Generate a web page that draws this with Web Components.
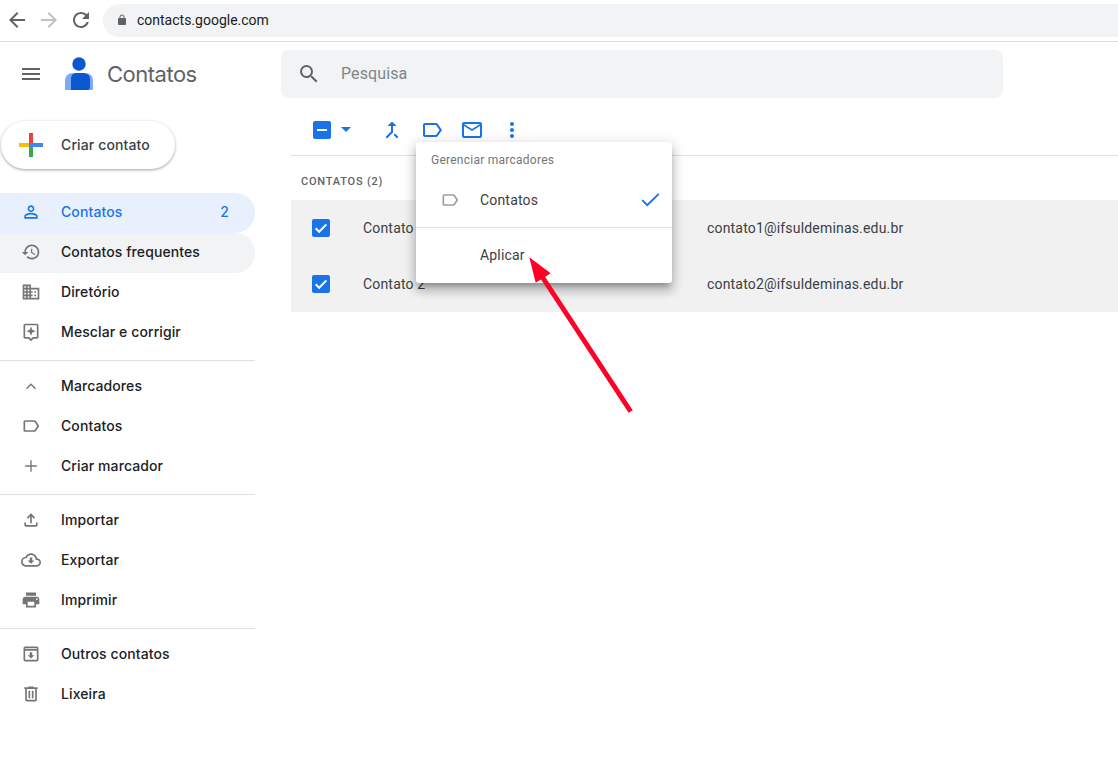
<!DOCTYPE html>
<html lang="pt">
<head>
<meta charset="utf-8">
<title>Contatos</title>
<style>
html,body{margin:0;padding:0;height:766px;overflow:hidden;background:#fff;font-family:Roboto,"Liberation Sans",sans-serif;}
</style>
</head>
<body>
<contacts-app></contacts-app>
<script>
const P={
menu:'M3 18h18v-2H3v2zm0-5h18v-2H3v2zm0-7v2h18V6H3z',
back:'M20 11H7.83l5.59-5.59L12 4l-8 8 8 8 1.41-1.41L7.83 13H20v-2z',
forward:'M12 4l-1.41 1.41L16.17 11H4v2h12.17l-5.58 5.59L12 20l8-8z',
refresh:'M17.65 6.35C16.2 4.9 14.21 4 12 4c-4.42 0-7.99 3.58-7.99 8s3.57 8 7.99 8c3.73 0 6.84-2.55 7.73-6h-2.08c-.82 2.33-3.04 4-5.65 4-3.31 0-6-2.69-6-6s2.69-6 6-6c1.66 0 3.14.69 4.22 1.78L13 11h7V4l-2.35 2.35z',
lock:'M18 8h-1V6c0-2.76-2.24-5-5-5S7 3.24 7 6v2H6c-1.1 0-2 .9-2 2v10c0 1.1.9 2 2 2h12c1.1 0 2-.9 2-2V10c0-1.1-.9-2-2-2zM9 6c0-1.66 1.34-3 3-3s3 1.34 3 3v2H9V6z',
person:'M12 5.9c1.16 0 2.1.94 2.1 2.1s-.94 2.1-2.1 2.1S9.9 9.16 9.9 8s.94-2.1 2.1-2.1m0 9c2.97 0 6.1 1.46 6.1 2.1v1.1H5.9V17c0-.64 3.13-2.1 6.1-2.1M12 4C9.79 4 8 5.79 8 8s1.79 4 4 4 4-1.79 4-4-1.79-4-4-4zm0 9c-2.67 0-8 1.34-8 4v3h16v-3c0-2.66-5.33-4-8-4z',
history:'M13 3c-4.97 0-9 4.03-9 9H1l3.89 3.89.07.14L9 12H6c0-3.87 3.13-7 7-7s7 3.13 7 7-3.13 7-7 7c-1.93 0-3.68-.79-4.94-2.06l-1.42 1.42C8.27 19.99 10.51 21 13 21c4.97 0 9-4.03 9-9s-4.03-9-9-9zm-1 5v5l4.28 2.54.72-1.21-3.5-2.08V8H12z',
domain:'M12 7V3H2v18h20V7H12zM6 19H4v-2h2v2zm0-4H4v-2h2v2zm0-4H4V9h2v2zm0-4H4V5h2v2zm4 12H8v-2h2v2zm0-4H8v-2h2v2zm0-4H8V9h2v2zm0-4H8V5h2v2zm10 12h-8v-2h2v-2h-2v-2h2v-2h-2V9h8v10zm-2-8h-2v2h2v-2zm0 4h-2v2h2v-2z',
fix:'M19 2H5c-1.1 0-2 .9-2 2v14c0 1.1.9 2 2 2h4l3 3 3-3h4c1.1 0 2-.9 2-2V4c0-1.1-.9-2-2-2zm0 16h-4.83L12 20.17 9.83 18H5V4h14v14zM12 5.5l1.6 3.9 3.9 1.6-3.9 1.6-1.6 3.9-1.6-3.9-3.9-1.6 3.9-1.6z',
less:'M12 8.6l-6 6 1.2 1.2 4.8-4.8 4.8 4.8 1.2-1.2z',
label:'M17.63 5.84C17.27 5.33 16.67 5 16 5L5 5.01C3.9 5.01 3 5.9 3 7v10c0 1.1.9 1.99 2 1.99L16 19c.67 0 1.27-.33 1.63-.84L22 12l-4.37-6.16zM16 17H5V7h11l3.55 5L16 17z',
add:'M19 12.8h-6.2V19h-1.6v-6.2H5v-1.6h6.2V5h1.6v6.2H19z',
upload:'M18 15v3H6v-3H4v3c0 1.1.9 2 2 2h12c1.1 0 2-.9 2-2v-3h-2zM7 9l1.41 1.41L11 7.83V16h2V7.83l2.59 2.58L17 9l-5-5-5 5z',
cloud:'M19.35 10.04C18.67 6.59 15.64 4 12 4 9.11 4 6.6 5.64 5.35 8.04 2.34 8.36 0 10.91 0 14c0 3.31 2.69 6 6 6h13c2.76 0 5-2.24 5-5 0-2.64-2.05-4.78-4.65-4.96zM19 18H6c-2.21 0-4-1.79-4-4 0-2.05 1.53-3.76 3.56-3.97l1.07-.11.5-.95C8.08 7.14 9.94 6 12 6c2.62 0 4.88 1.86 5.39 4.43l.3 1.5 1.53.11c1.56.1 2.78 1.41 2.78 2.96 0 1.65-1.35 3-3 3zM13.5 9h-3v3.5H8l4 4 4-4h-2.5z',
print:'M19 8H5c-1.66 0-3 1.34-3 3v6h4v4h12v-4h4v-6c0-1.66-1.34-3-3-3zm-3 11H8v-5h8v5zm3-7c-.55 0-1-.45-1-1s.45-1 1-1 1 .45 1 1-.45 1-1 1zm-1-9H6v4h12V3z',
archive:'M19 3H5c-1.1 0-2 .9-2 2v14c0 1.1.9 2 2 2h14c1.1 0 2-.9 2-2V5c0-1.1-.9-2-2-2zm0 16H5V8h14v11zM5 6V5h14v1H5zM12 17.5l4-4h-2.5V10h-3v3.5H8z',
trash:'M15 4V3H9v1H4v2h1v13c0 1.1.9 2 2 2h10c1.1 0 2-.9 2-2V6h1V4h-5zm2 15H7V6h10v13zM9 8h2v9H9zm4 0h2v9h-2z',
search:'M15.5 14h-.79l-.28-.27A6.471 6.471 0 0 0 16 9.5 6.5 6.5 0 1 0 9.5 16c1.61 0 3.09-.59 4.23-1.57l.27.28v.79l5 4.99L20.49 19l-4.99-5zm-6 0C7.01 14 5 11.99 5 9.5S7.01 5 9.5 5 14 7.01 14 9.5 11.99 14 9.5 14z',
merge:'M17 20.41L18.41 19 15 15.59 13.59 17 17 20.41zM7.5 8H11v5.59L5.59 19 7 20.41l6-6V8h3.5L12 3.5 7.5 8z',
mail:'M20 4H4c-1.1 0-2 .9-2 2v12c0 1.1.9 2 2 2h16c1.1 0 2-.9 2-2V6c0-1.1-.9-2-2-2zm0 14H4V8l8 5 8-5v10zm-8-7L4 6h16l-8 5z',
more:'M12 8c1.1 0 2-.9 2-2s-.9-2-2-2-2 .9-2 2 .9 2 2 2zm0 2c-1.1 0-2 .9-2 2s.9 2 2 2 2-.9 2-2-.9-2-2-2zm0 6c-1.1 0-2 .9-2 2s.9 2 2 2 2-.9 2-2-.9-2-2-2z',
check:'M3.5 12.8l1.3-1.3 4.4 4.2L20.2 5.3l1.3 1.3L9.2 18.4z'
};
const def=(name,html,extra)=>{
  customElements.define(name,class extends HTMLElement{
    constructor(){super();const r=this.attachShadow({mode:'open'});r.innerHTML=html;if(extra)extra(this,r);}
  });
};
customElements.define('m-icon',class extends HTMLElement{
  connectedCallback(){
    if(this.shadowRoot)return;
    const s=this.getAttribute('size')||24,c=this.getAttribute('color')||'currentColor',n=this.getAttribute('name');
    this.attachShadow({mode:'open'}).innerHTML=`<style>:host{display:block;width:${s}px;height:${s}px;flex:none}svg{display:block}</style><svg xmlns="http://www.w3.org/2000/svg" width="${s}" height="${s}" viewBox="0 0 24 24"><path fill="${c}" d="${P[n]}"/></svg>`;
  }
});

def('browser-bar',`<style>
:host{display:flex;align-items:center;box-sizing:border-box;height:42px;border-bottom:1px solid #dcdcdc;padding:0 0 1px 5px;gap:8px;background:#fff}
.pill{flex:1;margin-left:2px;height:33px;border-radius:17px 0 0 17px;background:#f1f3f4;display:flex;align-items:center;padding-left:10px;font:14px/20px Roboto,sans-serif;color:#202124}
</style>
<m-icon name="back" size="24" color="#5f6368"></m-icon>
<m-icon name="forward" size="24" color="#bdc1c6"></m-icon>
<m-icon name="refresh" size="24" color="#5f6368"></m-icon>
<div class="pill"><m-icon name="lock" size="12" color="#5f6368" style="margin-left:3px"></m-icon><span style="margin-left:9px">contacts.google.com</span></div>`);

def('app-logo',`<style>
:host{display:flex;align-items:center;height:64px;box-sizing:border-box;padding-left:19px}
svg{display:block;margin-left:22px;margin-right:14px}
.t{font:400 22px/28px Inter,Roboto,sans-serif;color:#5f6368;letter-spacing:-.5px}
</style>
<m-icon name="menu" size="24" color="#5f6368"></m-icon>
<svg width="28" height="34" viewBox="0 0 28 34"><path fill="#7baaf7" d="M0 33V24c0-5 3-8 8-8h12c5 0 8 3 8 8v9z"/><path fill="#0b57d0" d="M6 33V22c0-4 2-6 6-6h5c5 0 8 2 8 6v8c0 2-1 3-3 3z"/><circle cx="14" cy="7" r="6.7" fill="#0b57d0"/></svg>
<span class="t">Contatos</span>`);

def('create-button',`<style>
:host{display:inline-flex;align-items:center;box-sizing:border-box;height:48px;width:174px;margin:15px 0 24px 1px;border-radius:24px;background:#fff;box-shadow:0 1px 2px rgba(60,64,67,.3),0 1px 3px 1px rgba(60,64,67,.15);padding-left:18px;font:500 14px/20px Inter,Roboto,sans-serif;color:#3c4043;letter-spacing:.12px}
svg{display:block;margin-right:18px}
</style>
<svg width="24" height="24" viewBox="0 0 24 24"><rect x="10" width="4" height="10" fill="#ea4335"/><rect x="14" y="10" width="10" height="4" fill="#4285f4"/><rect x="10" y="14" width="4" height="10" fill="#34a853"/><rect y="10" width="10" height="4" fill="#fbbc05"/><rect x="10" y="10" width="4" height="4" fill="#4285f4"/></svg>
<slot></slot>`);

customElements.define('nav-item',class extends HTMLElement{
  connectedCallback(){
    if(this.shadowRoot)return;
    const st=this.getAttribute('state')||'',ic=this.getAttribute('icon'),n=this.getAttribute('count')||'';
    const bg=st==='active'?'#e8f0fe':st==='hover'?'#f1f3f4':'transparent';
    const col=st==='active'?'#1a73e8':'#202124';
    const icol=st==='active'?'#1a73e8':'#757575';
    this.attachShadow({mode:'open'}).innerHTML=`<style>
:host{display:flex;align-items:center;box-sizing:border-box;height:40px;border-radius:0 20px 20px 0;background:${bg};padding:0 26px 0 21px;font:500 14px/20px Inter,Roboto,sans-serif;color:${col};letter-spacing:.1px}
.l{margin-left:20px;flex:1;position:relative;top:-1px}
.n{position:relative;top:-1px}
</style><m-icon name="${ic}" size="20" color="${icol}" style="position:relative;top:-1px"></m-icon><span class="l"><slot></slot></span>${n?`<span class="n">${n}</span>`:''}`;
  }
});

def('nav-divider',`<style>:host{display:block;height:1px;background:#e0e0e0;margin:7px 0 6px}</style>`);

def('app-sidebar',`<style>
:host{display:block;width:255px;flex:none;box-sizing:border-box}
nav{display:flex;flex-direction:column}
</style>
<app-logo></app-logo>
<create-button>Criar contato</create-button>
<nav>
<nav-item icon="person" state="active" count="2">Contatos</nav-item>
<nav-item icon="history" state="hover">Contatos frequentes</nav-item>
<nav-item icon="domain">Diretório</nav-item>
<nav-item icon="fix">Mesclar e corrigir</nav-item>
<nav-divider></nav-divider>
<nav-item icon="less">Marcadores</nav-item>
<nav-item icon="label">Contatos</nav-item>
<nav-item icon="add">Criar marcador</nav-item>
<nav-divider></nav-divider>
<nav-item icon="upload">Importar</nav-item>
<nav-item icon="cloud">Exportar</nav-item>
<nav-item icon="print">Imprimir</nav-item>
<nav-divider></nav-divider>
<nav-item icon="archive">Outros contatos</nav-item>
<nav-item icon="trash">Lixeira</nav-item>
</nav>`);

def('search-box',`<style>
:host{display:flex;align-items:center;box-sizing:border-box;width:722px;height:48px;margin:8px 0 0 26px;border-radius:8px;background:#f1f3f4;padding-left:16px;font:400 16px/24px Roboto,sans-serif;color:#80868b;letter-spacing:.1px}
span{margin-left:20px}
</style><m-icon name="search" size="24" color="#5f6368"></m-icon><span><slot></slot></span>`);

customElements.define('check-box',class extends HTMLElement{
  connectedCallback(){
    if(this.shadowRoot)return;
    const ind=this.hasAttribute('indeterminate');
    this.attachShadow({mode:'open'}).innerHTML=`<style>:host{display:block;width:18px;height:18px;flex:none;border-radius:2px;background:#1a73e8}svg{display:block}</style><svg width="18" height="18" viewBox="0 0 18 18">${ind?'<rect x="4" y="8" width="10" height="2" fill="#fff"/>':'<path d="M3.6 9.2l3.6 3.6 7.2-7.4" fill="none" stroke="#fff" stroke-width="2"/>'}</svg>`;
  }
});

def('contact-toolbar',`<style>
:host{display:flex;align-items:center;box-sizing:border-box;height:51px;margin:7px 0 0 36px;border-bottom:1px solid #e0e0e0;padding:0 0 1px 22px}
.caret{width:0;height:0;border-left:5px solid transparent;border-right:5px solid transparent;border-top:5px solid #1a73e8;margin:0 21px 0 10px}
.b{width:40px;height:40px;display:flex;align-items:center;justify-content:center}
</style>
<check-box indeterminate></check-box><span class="caret"></span>
<span class="b" style="margin-left:0"><m-icon name="merge" size="24" color="#1a73e8"></m-icon></span>
<span class="b"><m-icon name="label" size="24" color="#1a73e8"></m-icon></span>
<span class="b"><m-icon name="mail" size="24" color="#1a73e8"></m-icon></span>
<span class="b"><m-icon name="more" size="24" color="#1a73e8"></m-icon></span>`);

def('section-heading',`<style>
:host{display:flex;align-items:center;box-sizing:border-box;height:44px;margin-left:36px;padding:8px 0 0 10px;font:500 11px/16px Roboto,sans-serif;letter-spacing:.8px;color:#5f6368}
</style><slot></slot>`);

customElements.define('contact-row',class extends HTMLElement{
  connectedCallback(){
    if(this.shadowRoot)return;
    this.attachShadow({mode:'open'}).innerHTML=`<style>
:host{display:flex;align-items:center;box-sizing:border-box;height:56px;margin-left:36px;background:#f1f1f1;padding-left:21px;font:400 14px/20px Roboto,sans-serif;color:#3c4043;letter-spacing:.18px}
.n{margin-left:33px;width:344px}
</style><check-box></check-box><span class="n">${this.getAttribute('name')}</span><span>${this.getAttribute('email')}</span>`;
  }
});

def('label-menu',`<style>
:host{position:absolute;left:416px;top:142px;width:256px;height:141px;box-sizing:border-box;background:#fff;border-radius:3px;box-shadow:0 8px 10px 1px rgba(0,0,0,.16),0 3px 14px 2px rgba(0,0,0,.14),0 5px 5px -3px rgba(0,0,0,.25);display:flex;flex-direction:column;font:400 14px/20px Roboto,sans-serif;color:#3c4043;letter-spacing:.18px}
.h{height:36px;display:flex;align-items:center;padding-left:15px;font-size:12px;color:#757575;letter-spacing:.25px}
.r{height:50px;display:flex;align-items:center;padding:0 0 6px 24px;box-sizing:border-box;border-bottom:1px solid #e0e0e0}
.r span{margin-left:20px;flex:1}
.r m-icon:last-child{margin-right:10px}
.a{flex:1;display:flex;align-items:center;padding:0 0 1px 64px}
</style>
<div class="h">Gerenciar marcadores</div>
<div class="r"><m-icon name="label" size="20" color="#9e9e9e"></m-icon><span>Contatos</span><m-icon name="check" size="24" color="#1a73e8"></m-icon></div>
<div class="a">Aplicar</div>`);

def('annotation-arrow',`<style>
:host{position:absolute;left:0;top:0;width:1118px;height:766px;pointer-events:none}
svg{display:block}
</style><svg width="1118" height="766" viewBox="0 0 1118 766">
<line x1="630.7" y1="411.5" x2="541" y2="275" stroke="#ff0026" stroke-width="5"/>
<polygon points="529.3,257.3 550.7,273.3 535.7,282.7" fill="#ff0026"/></svg>`);

def('contacts-main',`<style>
:host{display:flex;flex-direction:column;flex:1;min-width:0}
</style>
<search-box>Pesquisa</search-box>
<contact-toolbar></contact-toolbar>
<section-heading>CONTATOS (2)</section-heading>
<contact-row name="Contato 1" email="contato1@ifsuldeminas.edu.br"></contact-row>
<contact-row name="Contato 2" email="contato2@ifsuldeminas.edu.br"></contact-row>`);

def('contacts-app',`<style>
:host{display:flex;flex-direction:column;position:relative;width:1118px;height:766px;overflow:hidden;background:#fff}
.body{display:flex;flex:1;min-height:0}
</style>
<browser-bar></browser-bar>
<div class="body"><app-sidebar></app-sidebar><contacts-main></contacts-main></div>
<label-menu></label-menu>
<annotation-arrow></annotation-arrow>`);
</script>
</body>
</html>
